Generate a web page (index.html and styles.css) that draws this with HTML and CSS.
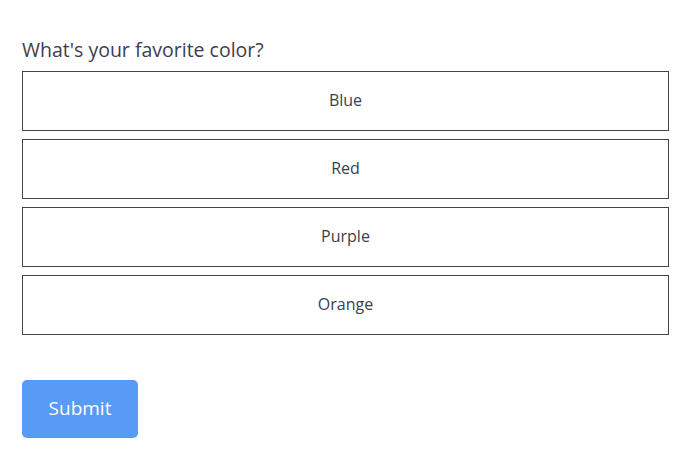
FILE: index.html
```html
<!DOCTYPE html>
<html lang="en">
<head>
<meta charset="UTF-8" />
<title>Color poll</title>
<link rel="stylesheet" href="styles.css">
</head>
<body>
<div class="poll">
  <div class="question">What's your favorite color?</div>
  <div class="options">
    <button class="option">Blue</button>
    <button class="option">Red</button>
    <button class="option">Purple</button>
    <button class="option">Orange</button>
  </div>
  <button class="submit">Submit</button>
</div>
</body>
</html>
```

FILE: styles.css
```css
body {
  margin: 0;
  background: #fff;
  font-family: "Open Sans", sans-serif;
  color: #3d3d4f;
}
.poll {
  width: 647px;
  padding: 38px 0 0 22px;
}
.question {
  font-size: 19.5px;
  line-height: 24px;
  margin-bottom: 9px;
}
.options {
  display: flex;
  flex-direction: column;
  gap: 8px;
}
.option {
  height: 60px;
  padding: 0 0 2px;
  border: 1px solid #444;
  background: #fff;
  font-family: inherit;
  font-size: 16px;
  color: #3d3d4f;
}
.submit {
  margin-top: 45px;
  width: 116px;
  height: 58px;
  padding: 0 0 2px;
  border: none;
  border-radius: 5px;
  background: #589bf6;
  color: #fff;
  font-family: inherit;
  font-size: 19px;
}
```
